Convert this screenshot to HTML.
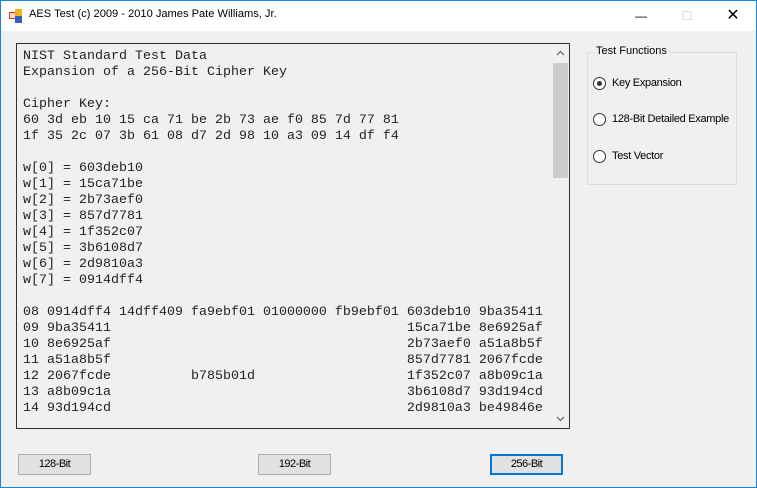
<!DOCTYPE html>
<html><head><style>
body{margin:0;width:757px;height:488px;overflow:hidden;font-family:"Liberation Sans",sans-serif;}
.win{position:absolute;left:0;top:0;width:755px;height:486px;border:1px solid #1883d7;background:#f0f0f0;}
.title{position:absolute;left:0;top:0;width:755px;height:30px;background:#fff;}
.title .t{position:absolute;left:28px;top:7px;font-size:11.1px;color:#000;}
.tb{position:absolute;top:0;width:46px;height:30px;font-size:12px;color:#000;text-align:center;line-height:30px}
.box{position:absolute;left:15px;top:42px;width:552px;height:384px;border:1px solid #333;background:#f0f0f0;}
pre{margin:0;position:absolute;left:6px;top:5px;font-family:"Liberation Mono",monospace;font-size:13.33px;line-height:16px;color:#222;}
.sb{position:absolute;left:535px;top:0;width:17px;height:384px;background:#f0f0f0;}
.thumb{position:absolute;left:1px;top:19px;width:15px;height:115px;background:#cdcdcd;}
.grp{position:absolute;left:586px;top:51px;width:148px;height:131px;border:1px solid #dcdcdc;}
.grp .lg{position:absolute;left:6px;top:-8px;background:#f0f0f0;padding:0 2px;font-size:11px;}
.rad{position:absolute;left:592px;font-size:11px;letter-spacing:-0.3px}
.rad i{position:absolute;left:0;top:0;width:11px;height:11px;border:1px solid #333;border-radius:50%;background:#fff;}
.rad i b{position:absolute;left:3px;top:3px;width:5px;height:5px;border-radius:50%;background:#333;}
.rad span{position:absolute;left:19px;top:0;white-space:nowrap;}
.btn{position:absolute;top:453px;width:71px;height:19px;border:1px solid #adadad;background:#e1e1e1;font-size:11px;text-align:center;line-height:19px;letter-spacing:-0.5px}
</style></head><body>
<div class="win">
<div class="title">
<svg style="position:absolute;left:8px;top:8px" width="14" height="14"><rect x="0" y="3" width="7" height="7" fill="#e03020"/><rect x="6" y="0" width="7" height="7" fill="#f0b020"/><rect x="6" y="7" width="7" height="7" fill="#3060c0"/><rect x="1" y="4" width="5" height="5" fill="#f8d8c8"/></svg>
<div class="t">AES Test (c) 2009 - 2010 James Pate Williams, Jr.</div>
<div class="tb" style="left:617px">&#8212;</div>
<div class="tb" style="left:663px;color:#ccc">&#9744;</div>
<div class="tb" style="left:709px;font-size:16px">&#10005;</div>
</div>
<div class="box">
<pre>NIST Standard Test Data
Expansion of a 256-Bit Cipher Key

Cipher Key:
60 3d eb 10 15 ca 71 be 2b 73 ae f0 85 7d 77 81
1f 35 2c 07 3b 61 08 d7 2d 98 10 a3 09 14 df f4

w[0] = 603deb10
w[1] = 15ca71be
w[2] = 2b73aef0
w[3] = 857d7781
w[4] = 1f352c07
w[5] = 3b6108d7
w[6] = 2d9810a3
w[7] = 0914dff4

08 0914dff4 14dff409 fa9ebf01 01000000 fb9ebf01 603deb10 9ba35411
09 9ba35411                                     15ca71be 8e6925af
10 8e6925af                                     2b73aef0 a51a8b5f
11 a51a8b5f                                     857d7781 2067fcde
12 2067fcde          b785b01d                   1f352c07 a8b09c1a
13 a8b09c1a                                     3b6108d7 93d194cd
14 93d194cd                                     2d9810a3 be49846e</pre>
<div class="sb">
<svg style="position:absolute;left:4px;top:6px" width="9" height="6"><path d="M1 5 L4.5 1.5 L8 5" fill="none" stroke="#606060" stroke-width="1.2"/></svg>
<div class="thumb"></div>
<svg style="position:absolute;left:4px;top:372px" width="9" height="6"><path d="M1 1 L4.5 4.5 L8 1" fill="none" stroke="#606060" stroke-width="1.2"/></svg>
</div>
</div>
<div class="grp"><div class="lg">Test Functions</div></div>
<div class="rad" style="top:76px"><i><b></b></i><span>Key Expansion</span></div>
<div class="rad" style="top:112px"><i></i><span>128-Bit Detailed Example</span></div>
<div class="rad" style="top:149px"><i></i><span>Test Vector</span></div>
<div class="btn" style="left:17px">128-Bit</div>
<div class="btn" style="left:257px">192-Bit</div>
<div class="btn" style="left:489px;border:2px solid #0078d7;width:69px;height:17px;line-height:17px">256-Bit</div>
</div>
</body></html>
